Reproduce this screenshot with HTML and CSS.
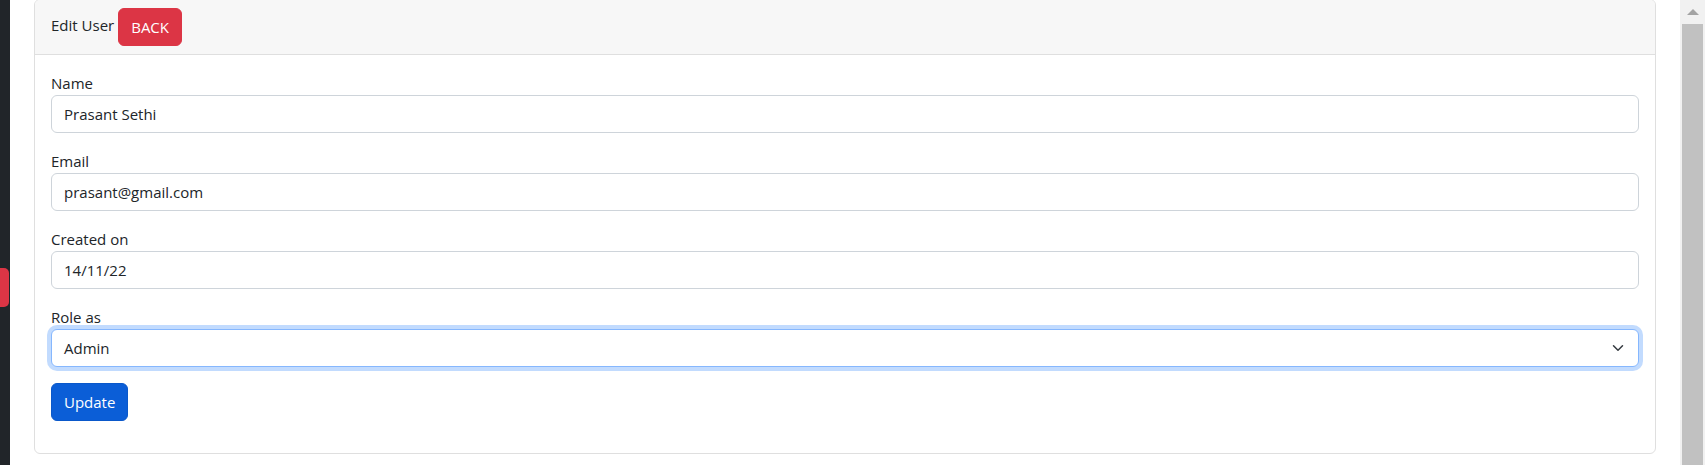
FILE: index.html
```html
<!DOCTYPE html>
<html lang="en">
<head>
<meta charset="utf-8">
<title>Edit User</title>
<link rel="stylesheet" href="styles.css">
</head>
<body>
<div class="app">
  <aside class="sidebar"><span class="sidebar-tab"></span></aside>
  <main class="content">
    <div class="card">
      <div class="card-header">
        <span class="card-title">Edit User</span>
        <button class="btn btn-danger" type="button">BACK</button>
      </div>
      <div class="card-body">
        <form class="form">
          <div class="field">
            <label class="label" for="name">Name</label>
            <input class="form-control" id="name" type="text" value="Prasant Sethi">
          </div>
          <div class="field">
            <label class="label" for="email">Email</label>
            <input class="form-control" id="email" type="text" value="prasant@gmail.com">
          </div>
          <div class="field">
            <label class="label" for="created">Created on</label>
            <input class="form-control" id="created" type="text" value="14/11/22">
          </div>
          <div class="field">
            <label class="label">Role as</label>
            <div class="form-select is-focused">
              <span>Admin</span>
              <svg class="chevron" width="16" height="12" viewBox="0 0 16 16"><path d="M2 5l6 6 6-6" fill="none" stroke="#343a40" stroke-width="2" stroke-linecap="round" stroke-linejoin="round"/></svg>
            </div>
          </div>
          <div class="field">
            <button class="btn btn-primary" type="button">Update</button>
          </div>
        </form>
      </div>
    </div>
  </main>
  <div class="scrollbar">
    <div class="scroll-arrow"></div>
    <div class="scroll-thumb"></div>
  </div>
</div>
</body>
</html>
```
FILE: styles.css
```css
* { box-sizing: border-box; }
html, body { margin: 0; padding: 0; height: 100%; overflow: hidden; }
body {
  font-family: "Open Sans", "Noto Sans", sans-serif;
  font-size: 15px;
  line-height: 24px;
  color: #212529;
  background: #fff;
}
.app {
  display: flex;
  height: 465px;
}
.sidebar {
  width: 10px;
  flex: 0 0 10px;
  background: #212529;
  display: flex;
  flex-direction: column;
}
.sidebar-tab {
  display: block;
  margin-top: 268px;
  width: 9px;
  height: 39px;
  background: #dc3545;
  border-radius: 0 5px 5px 0;
}
.content {
  flex: 1;
  padding: 0 24px;
}
.card {
  margin-top: -1px;
  border: 1px solid #dfdfdf;
  border-radius: 6px;
  background: #fff;
}
.card-header {
  display: flex;
  align-items: flex-start;
  gap: 4px;
  padding: 8px 16px;
  background: #f7f7f7;
  border-bottom: 1px solid #dfdfdf;
  border-radius: 5px 5px 0 0;
}
.card-title {
  padding-top: 5px;
}
.card-body {
  padding: 16px 16px 16px;
}
.form {
  display: flex;
  flex-direction: column;
  gap: 16px;
}
.field {
  display: flex;
  flex-direction: column;
  align-items: flex-start;
}
.field:last-child { margin-bottom: 16px; }
.label {
  display: block;
}
.form-control,
.form-select {
  width: 100%;
  height: 38px;
  padding: 6px 12px;
  font: inherit;
  color: #212529;
  background: #fff;
  border: 1px solid #ced4da;
  border-radius: 6px;
  outline: none;
}
.form-select {
  display: flex;
  align-items: center;
  justify-content: space-between;
  padding-right: 12px;
}
.form-select.is-focused {
  border-color: #86b7fe;
  box-shadow: 0 0 0 4px rgba(13, 110, 253, 0.25);
}
.chevron { display: block; flex: 0 0 auto; }
.btn {
  display: inline-block;
  height: 38px;
  padding: 6px 12px;
  font: inherit;
  color: #fff;
  border: 1px solid transparent;
  border-radius: 6px;
  cursor: pointer;
}
.btn-danger { background: #dc3545; border-color: #dc3545; }
.btn-primary { background: #0b5ed7; border-color: #0a58ca; }
.scrollbar {
  width: 25px;
  flex: 0 0 25px;
  background: #f1f1f1;
  display: flex;
  flex-direction: column;
  align-items: center;
}
.scroll-arrow {
  margin-top: 9px;
  width: 0;
  height: 0;
  border-left: 6px solid transparent;
  border-right: 6px solid transparent;
  border-bottom: 6px solid #a3a3a3;
}
.scroll-thumb {
  margin-top: 9px;
  width: 21px;
  flex: 1;
  background: #c1c1c1;
}
```
